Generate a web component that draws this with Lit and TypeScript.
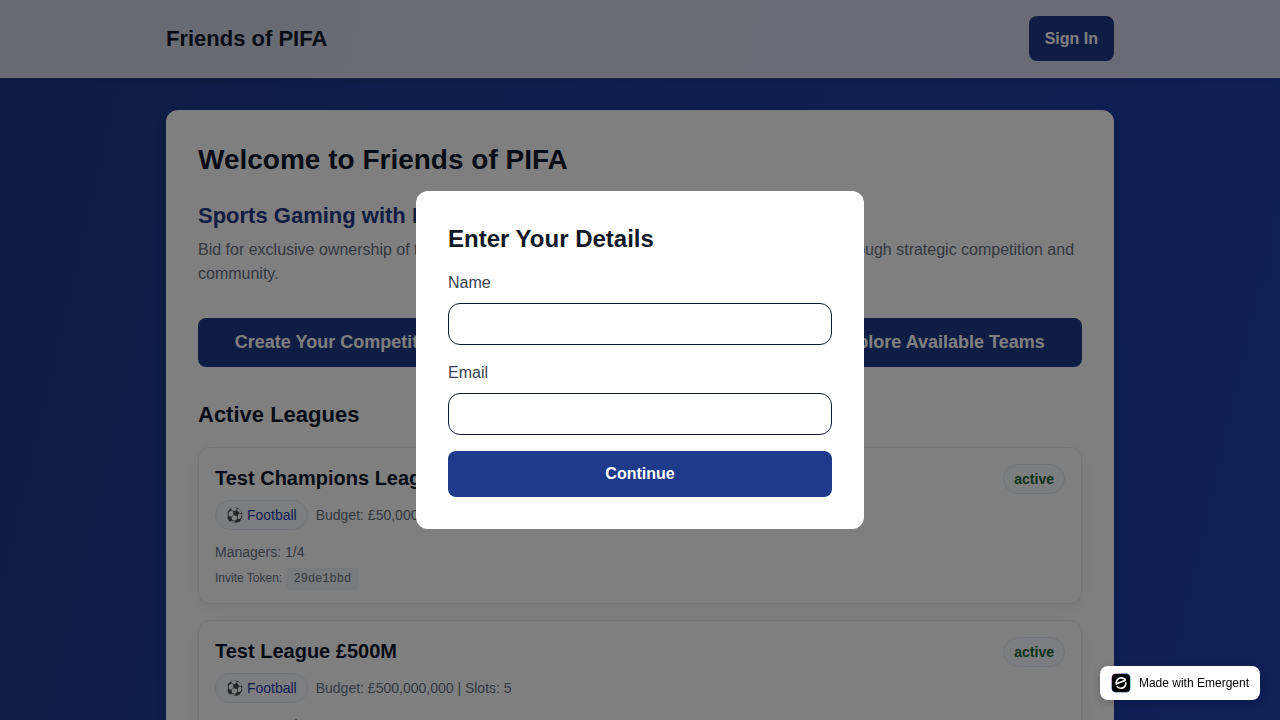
import { LitElement, html, css, svg } from "lit";
import { customElement, property, state } from "lit/decorators.js";

interface League {
  name: string;
  budget: string;
  slots: number;
  managers: string;
  token: string;
  status: string;
}

const LEAGUES: League[] = [
  { name: "Test Champions League", budget: "£50,000,000", slots: 3, managers: "1/4", token: "29de1bbd", status: "active" },
  { name: "Test League £500M", budget: "£500,000,000", slots: 5, managers: "1/8", token: "7c41fa02", status: "active" },
];

@customElement("league-card")
class LeagueCard extends LitElement {
  @property({ attribute: false }) league!: League;

  static styles = css`
    :host { display: block; }
    .card {
      display: flex;
      justify-content: space-between;
      align-items: flex-start;
      padding: 16px;
      border: 1px solid #e8ebf2;
      border-radius: 12px;
      background: #fff;
      box-shadow: 0 4px 16px rgba(0, 0, 0, 0.06);
    }
    .title { margin: 0 0 8px; font-size: 20px; line-height: 28px; font-weight: 700; color: #0f172a; }
    .meta { display: flex; align-items: center; gap: 8px; margin-bottom: 12px; }
    .chip {
      box-sizing: border-box;
      height: 30px;
      padding: 4px 10px;
      border: 1px solid #e2e8f0;
      border-radius: 15px;
      background: #f8fafc;
      font-size: 14px;
      line-height: 20px;
      color: #1e40af;
    }
    .status { font-weight: 700; color: #166534; }
    .text { margin: 0; font-size: 14px; line-height: 20px; color: #6b7280; }
    .invite { margin: 8px 0 0; font-size: 12px; line-height: 16px; color: #6b7280; }
    .token {
      padding: 4px 8px;
      border-radius: 4px;
      background: #f3f4f6;
      font-family: "Liberation Mono", monospace;
      font-size: 12px;
    }
  `;

  render() {
    const l = this.league;
    return html`
      <article class="card">
        <div>
          <h3 class="title">${l.name}</h3>
          <div class="meta">
            <span class="chip">⚽ Football</span>
            <span class="text">Budget: ${l.budget} | Slots: ${l.slots}</span>
          </div>
          <p class="text">Managers: ${l.managers}</p>
          <p class="invite">Invite Token: <code class="token">${l.token}</code></p>
        </div>
        <span class="chip status">${l.status}</span>
      </article>
    `;
  }
}

@customElement("app-root")
class AppRoot extends LitElement {
  @state() private open = true;

  static styles = css`
    :host {
      display: block;
      min-height: 100vh;
      font-family: "Liberation Sans", Arial, sans-serif;
      font-size: 16px;
      line-height: 24px;
      color: #0f172a;
      background: linear-gradient(103deg, #1e3a8a 0%, #1e40af 100%) fixed;
    }
    h1, h2, h3, p { margin: 0; }
    .header {
      border-bottom: 1px solid #e5e7eb;
      background: rgba(255, 255, 255, 0.8);
      box-shadow: 0 2px 8px rgba(0, 0, 0, 0.1);
    }
    .bar, .page {
      box-sizing: border-box;
      max-width: 980px;
      margin: 0 auto;
      padding: 16px;
    }
    .bar { display: flex; align-items: center; justify-content: space-between; }
    .page { padding: 32px 16px; }
    .brand { font-size: 22px; line-height: 28px; font-weight: 700; }
    .button {
      border: 0;
      border-radius: 8px;
      background: #1e3a8a;
      color: #fff;
      font: 700 16px/21px "Liberation Sans", Arial, sans-serif;
      padding: 12px 16px;
      cursor: pointer;
    }
    .large { font-size: 18px; line-height: 25px; }
    .panel {
      padding: 32px;
      border-radius: 12px;
      background: #fff;
      box-shadow: 0 4px 12px rgba(0, 0, 0, 0.1);
    }
    .welcome { font-size: 28px; line-height: 36px; margin-bottom: 24px; }
    .tagline { font-size: 22px; line-height: 28px; margin-bottom: 8px; color: #1e3a8a; }
    .lead { color: #6b7280; margin-bottom: 32px; }
    .actions { display: grid; grid-template-columns: repeat(3, 1fr); gap: 16px; margin-bottom: 32px; }
    .section { font-size: 22px; line-height: 32px; margin-bottom: 16px; }
    .leagues { display: grid; gap: 16px; }
    .overlay {
      position: fixed;
      inset: 0;
      display: flex;
      align-items: center;
      justify-content: center;
      padding: 16px;
      background: rgba(0, 0, 0, 0.5);
    }
    .dialog {
      box-sizing: border-box;
      width: 100%;
      max-width: 448px;
      padding: 32px;
      border-radius: 12px;
      background: #fff;
    }
    .heading { font-size: 24px; line-height: 32px; margin-bottom: 16px; color: #111827; }
    .field { display: grid; gap: 8px; margin-bottom: 16px; }
    .label { color: #374151; }
    .input {
      box-sizing: border-box;
      width: 100%;
      height: 42px;
      padding: 8px 12px;
      border: 1px solid #0f172a;
      border-radius: 12px;
      background: #fff;
      font: inherit;
      color: inherit;
    }
    .submit { display: block; width: 100%; line-height: 22px; }
    .made {
      position: fixed;
      right: 20px;
      bottom: 20px;
      display: flex;
      align-items: center;
      gap: 8px;
      padding: 7px 11px;
      border-radius: 8px;
      background: #fff;
      box-shadow: 0 2px 8px rgba(0, 0, 0, 0.2);
      font-size: 12px;
      line-height: 20px;
      color: #000;
      text-decoration: none;
    }
    .logo { width: 20px; height: 20px; }
  `;

  private submit(e: Event) {
    e.preventDefault();
    this.open = false;
  }

  private logo() {
    return svg`
      <svg class="logo" viewBox="0 0 20 20" aria-hidden="true">
        <defs>
          <linearGradient id="rim" x1="0" y1="0" x2="1" y2="1">
            <stop offset="0" stop-color="#e05a8a"/>
            <stop offset=".35" stop-color="#2848b0"/>
            <stop offset=".7" stop-color="#3aa0b8"/>
            <stop offset="1" stop-color="#2840a0"/>
          </linearGradient>
        </defs>
        <rect x=".5" y=".5" width="19" height="19" rx="4.5" fill="url(#rim)"/>
        <rect x="1" y="1" width="18" height="18" rx="4" fill="#000"/>
        <path d="M5.3 11.2C4.8 7.5 7 4.9 10.2 4.9c2.100 0 3.700.8 4.100 2.100C13.500 8.500 8 8.900 5.300 11.200M14.900 9.900c-.2 3.100-2.200 5.300-4.900 5.300-1.600 0-2.900-.6-3.600-1.500" fill="none" stroke="#fff" stroke-width="1.600" stroke-linecap="round" stroke-linejoin="round"/>
      </svg>`;
  }

  render() {
    return html`
      <header class="header">
        <div class="bar">
          <div class="brand">Friends of PIFA</div>
          <button class="button" @click=${() => (this.open = true)}>Sign In</button>
        </div>
      </header>
      <main class="page">
        <div class="panel">
          <h1 class="welcome">Welcome to Friends of PIFA</h1>
          <h2 class="tagline">Sports Gaming with Friends</h2>
          <p class="lead">Bid for exclusive ownership of the teams you love, build your squads and earn your points through strategic competition and community.</p>
          <div class="actions">
            <button class="button large">Create Your Competition</button>
            <button class="button large">Join the Competition</button>
            <button class="button large">Explore Available Teams</button>
          </div>
          <h2 class="section">Active Leagues</h2>
          <div class="leagues">
            ${LEAGUES.map((l) => html`<league-card .league=${l}></league-card>`)}
          </div>
        </div>
      </main>
      ${this.open
        ? html`
            <div class="overlay">
              <form class="dialog" role="dialog" aria-labelledby="heading" @submit=${this.submit}>
                <h2 class="heading" id="heading">Enter Your Details</h2>
                <div class="field">
                  <label class="label" for="name">Name</label>
                  <input class="input" id="name" type="text" />
                </div>
                <div class="field">
                  <label class="label" for="email">Email</label>
                  <input class="input" id="email" type="email" />
                </div>
                <button class="button submit" type="submit">Continue</button>
              </form>
            </div>
          `
        : null}
      <a class="made" href="#">${this.logo()}<span>Made with Emergent</span></a>
    `;
  }
}
